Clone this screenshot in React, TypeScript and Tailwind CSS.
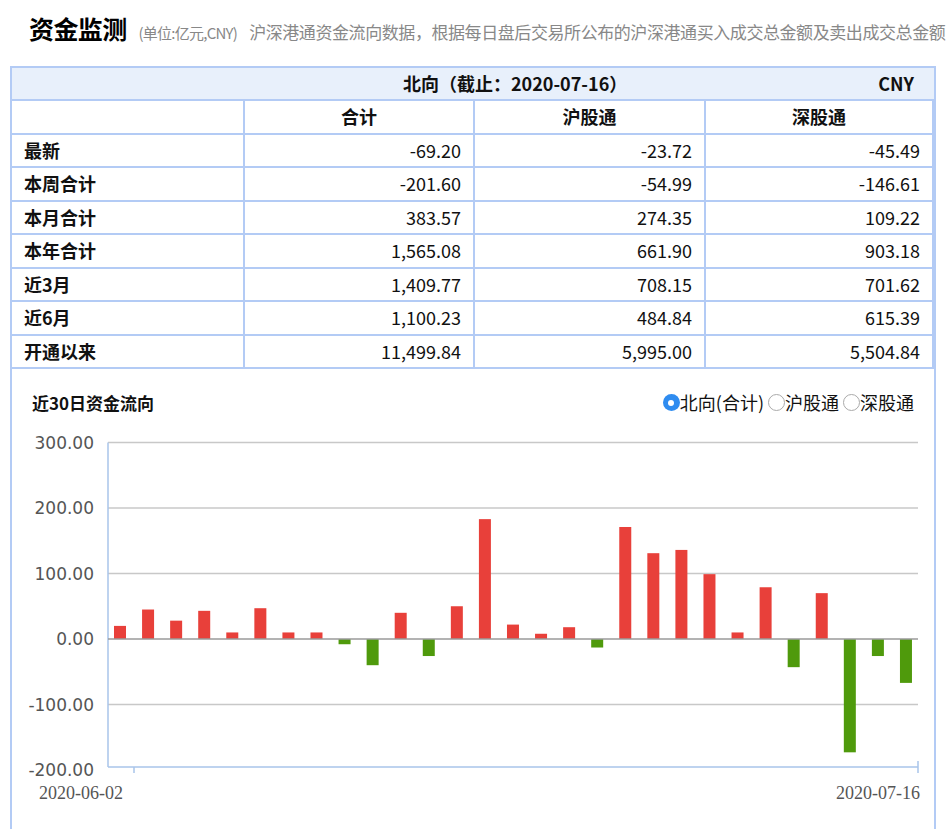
import React from "react";

const rows: [string, string, string, string][] = [
  ["最新", "-69.20", "-23.72", "-45.49"],
  ["本周合计", "-201.60", "-54.99", "-146.61"],
  ["本月合计", "383.57", "274.35", "109.22"],
  ["本年合计", "1,565.08", "661.90", "903.18"],
  ["近3月", "1,409.77", "708.15", "701.62"],
  ["近6月", "1,100.23", "484.84", "615.39"],
  ["开通以来", "11,499.84", "5,995.00", "5,504.84"],
];

const data = [20, 45, 28, 43, 10, 47, 10, 10, -8, -40, 40, -26, 50, 183, 22, 8, 18, -13, 171, 131, 136, 99, 10, 79, -43, 70, -173, -26, -67];

const Y = (v: number) => 210 - 0.655 * v;

function Chart() {
  return (
    <svg width={925} height={400} className="block">
      {[300, 200, 100, -100].map((v) => (
        <line key={v} x1={96} x2={906} y1={Y(v)} y2={Y(v)} stroke="#c8c8c8" strokeWidth={1.5} />
      ))}
      {[300, 200, 100, 0, -100, -200].map((v) => (
        <text key={v} x={82} y={Y(v) + 6} textAnchor="end" fontSize={17} fill="#555" fontFamily="DejaVu Sans, sans-serif">
          {v.toFixed(2)}
        </text>
      ))}
      <line x1={96} x2={96} y1={Y(300)} y2={338} stroke="#a9c4ea" strokeWidth={1.5} />
      <line x1={96} x2={906} y1={338} y2={338} stroke="#a9c4ea" strokeWidth={1.5} />
      <line x1={122} x2={122} y1={338} y2={344} stroke="#a9c4ea" strokeWidth={1.5} />
      <line x1={906} x2={906} y1={332} y2={344} stroke="#a9c4ea" strokeWidth={1.5} />
      {data.map((v, i) => {
        const cx = 108 + 28.07 * i;
        const top = v >= 0 ? Y(v) : Y(0);
        const h = Math.abs(0.655 * v);
        return <rect key={i} x={cx - 6} y={top} width={12} height={h} fill={v >= 0 ? "#e8403a" : "#4f9a0c"} />;
      })}
      <line x1={96} x2={906} y1={Y(0)} y2={Y(0)} stroke="#9a9a9a" strokeWidth={1.5} />
      <text x={27} y={370} fontSize={18} fill="#555" fontFamily="Liberation Serif, serif">2020-06-02</text>
      <text x={908} y={370} textAnchor="end" fontSize={18} fill="#555" fontFamily="Liberation Serif, serif">2020-07-16</text>
    </svg>
  );
}

const cell = "border-r-2 border-b-2 border-[#b3cbf5] h-[33.5px] px-3 flex items-center";

export default function App() {
  return (
    <div className="w-[950px] h-[829px] bg-white overflow-hidden" style={{ fontFamily: '"Noto Sans CJK SC", sans-serif' }}>
      <div className="flex items-baseline pl-[29px] pt-[10px] h-[66px] whitespace-nowrap overflow-hidden">
        <span className="text-[25px] font-bold text-black tracking-tight">资金监测</span>
        <span className="text-[15px] text-[#888] ml-3 tracking-tighter">(单位:亿元,CNY)</span>
        <span className="text-[17px] text-[#888] ml-3 tracking-tight">沪深港通资金流向数据，根据每日盘后交易所公布的沪深港通买入成交总金额及卖出成交总金额</span>
      </div>
      <div className="ml-[10px] w-[926px] border-l-2 border-r-2 border-t-2 border-[#b3cbf5] h-[770px]">
        <div className="bg-[#e8f0fb] border-b-2 border-[#b3cbf5] h-[33px] flex items-center relative text-[18px] font-bold text-[#111]">
          <div className="flex-1 text-center pl-[140px]">北向（截止：2020-07-16）</div>
          <div className="pr-5">CNY</div>
        </div>
        <div className="grid grid-cols-[233px_230px_231px_1fr] text-[18px] text-[#111]">
          <div className={cell}></div>
          <div className={cell + " justify-center font-bold"}>合计</div>
          <div className={cell + " justify-center font-bold"}>沪股通</div>
          <div className={cell + " justify-center font-bold border-r-0"}>深股通</div>
          {rows.map((r) => (
            <React.Fragment key={r[0]}>
              <div className={cell + " font-bold"}>{r[0]}</div>
              <div className={cell + " justify-end"}>{r[1]}</div>
              <div className={cell + " justify-end"}>{r[2]}</div>
              <div className={cell + " justify-end border-r-0"}>{r[3]}</div>
            </React.Fragment>
          ))}
        </div>
        <div className="flex items-center justify-between h-[60px] pl-[20px] pr-[20px] pt-[7px]">
          <span className="text-[17px] font-bold text-[#111]">近30日资金流向</span>
          <div className="flex items-center text-[18px] text-[#111]">
            <span className="w-[17px] h-[17px] rounded-full bg-[#2f8cf0] flex items-center justify-center"><span className="w-[6px] h-[6px] rounded-full bg-white" /></span>
            <span>北向(合计)</span>
            <span className="w-[17px] h-[17px] rounded-full border border-[#aaa] ml-[4px]" />
            <span>沪股通</span>
            <span className="w-[17px] h-[17px] rounded-full border border-[#aaa] ml-[4px]" />
            <span>深股通</span>
          </div>
        </div>
        <Chart />
      </div>
    </div>
  );
}
